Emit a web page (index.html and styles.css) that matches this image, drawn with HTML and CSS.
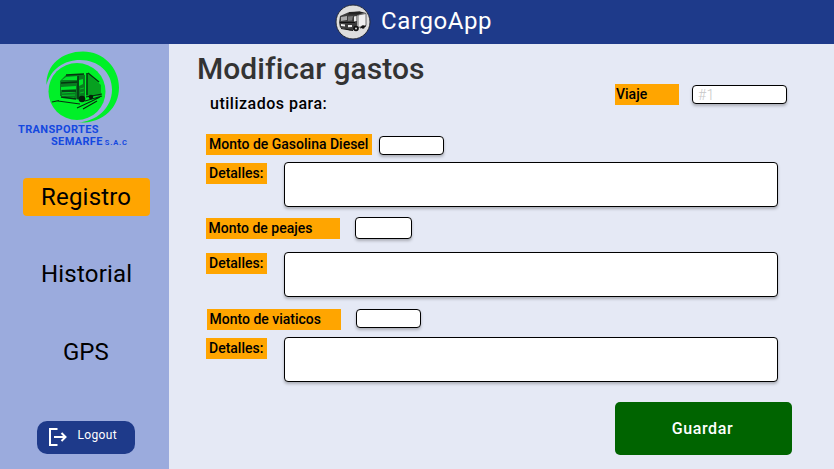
FILE: index.html
```html
<!DOCTYPE html>
<html lang="es">
<head>
<meta charset="utf-8">
<title>CargoApp</title>
<link rel="stylesheet" href="styles.css">
</head>
<body>
<header class="topbar">
  <svg class="topbar-logo" viewBox="0 0 36 36" width="36" height="36">
    <circle cx="18" cy="18" r="17" fill="#dedede" stroke="#252a38" stroke-width="1"/>
    <path d="M5 12l8-3.500 12-1v3l-3 1v10l-2 4-5 1-10-3-1-5z" fill="#3c3c3c"/>
    <path d="M14 8l11-.5 6 1.500-9 1.500-9 0z" fill="#222"/>
    <path d="M23 11l8-1.500v12l-8 2z" fill="#f0f0f0" stroke="#333" stroke-width=".7"/>
    <path d="M6 13l6-1v4l-6 1z" fill="#aaa"/>
    <path d="M13 12.500l5-.5-1 4.500-4 .5z" fill="#777"/>
    <path d="M19 12.500l2.500-.5v5l-2.500.5zM6 20l4 .5v2l-4-.5zM13 21l4 0v2l-4 .3z" fill="#ededed"/>
    <path d="M5 18.500h15M6 24.500l12 2M25 24l6-2" stroke="#111" fill="none"/>
    <circle cx="21" cy="24.500" r="2.800" fill="#111"/>
    <circle cx="21" cy="24.500" r="1" fill="#ddd"/>
    <circle cx="28" cy="23" r="1.800" fill="#111"/>
  </svg>
  <span class="brand">CargoApp</span>
</header>
<div class="layout">
  <aside class="sidebar">
    <div class="company">
      <svg class="company-mark" viewBox="46 51 74 73" width="74" height="73">
        <path fill="#00f028" d="M46.500 85C46 65 62 51.500 83 51.500c20 0 36 16 36 36 0 21-17 36.500-41 35 18-1 34-14 34-33C112 72 98 60 80 60c-16 0-29 9-33.500 25z"/>
        <circle cx="77" cy="91.500" r="28.500" fill="#00f028"/>
        <path fill="#087c20" d="M60 81l6-6 16-1 3 1v22l-5 3-20-4z"/>
        <path fill="#07a020" d="M87 73l14 12v11l-15 1z"/>
        <path fill="#00e329" d="M62 80l4-3 12-1-1 4zM61 87l15-1v3l-15 1zM79 80l4-1v5l-4 2z"/>
        <path stroke="#04d22a" stroke-width=".8" fill="none" d="M62 93l13-1M62 95.500l13-.5M63 98h11M80 89l4-1M80 93l4-1"/>
        <path stroke="#053410" stroke-width="1.500" fill="none" d="M61 83l16-1M62 91h14M61 97l15 2M78 76v23M66 75l18-1M87 73v22M88 73l11 9"/>
        <path stroke="#052e0e" stroke-width="1.200" fill="none" d="M52 102l7-1.500M58 101l22 3M86 97l16-3M85 101l17-5M77 108l15-7 8-4M83 109l14-8"/>
        <circle cx="82" cy="99" r="3.300" fill="#04230a"/>
        <circle cx="91" cy="97" r="2.300" fill="#04230a"/>
      </svg>
      <div class="company-name">TRANSPORTES</div>
      <div class="company-sub">SEMARFE<small>S.A.C</small></div>
    </div>
    <nav class="menu">
      <a class="menu-item active">Registro</a>
      <a class="menu-item">Historial</a>
      <a class="menu-item gps">GPS</a>
    </nav>
    <button class="logout">
      <svg viewBox="0 0 20 20" width="20" height="20" fill="none" stroke="#fff" stroke-width="2"><path d="M9.500 2H2v16h7.500M6 10h11.500M13.500 6l4 4-4 4"/></svg>
      <span>Logout</span>
    </button>
  </aside>
  <main class="content">
    <div class="heading">
      <div class="titles">
        <h1>Modificar gastos</h1>
        <p>utilizados para:</p>
      </div>
      <div class="trip">
        <label class="tag tag-trip">Viaje</label>
        <div class="field field-trip">#1</div>
      </div>
    </div>
    <section class="expense fuel">
      <div class="amount"><label class="tag">Monto de Gasolina Diesel</label><div class="field"></div></div>
      <div class="details"><label class="tag">Detalles:</label><div class="field area"></div></div>
    </section>
    <section class="expense tolls">
      <div class="amount"><label class="tag">Monto de peajes</label><div class="field"></div></div>
      <div class="details"><label class="tag">Detalles:</label><div class="field area"></div></div>
    </section>
    <section class="expense allowance">
      <div class="amount"><label class="tag">Monto de viaticos</label><div class="field"></div></div>
      <div class="details"><label class="tag">Detalles:</label><div class="field area"></div></div>
    </section>
    <button class="save">Guardar</button>
  </main>
</div>
</body>
</html>
```
FILE: styles.css
```css
* { box-sizing: border-box; }
body { margin: 0; width: 834px; height: 469px; overflow: hidden; font-family: Roboto, sans-serif; color: #000; background: #e5e9f5; }
button { border: 0; padding: 0; font-family: inherit; }
.topbar { height: 44px; background: #1e3a8a; display: flex; align-items: flex-start; padding: 4px 0 0 335px; }
.brand { margin-left: 10px; font-size: 24px; line-height: 34px; letter-spacing: .6px; color: #fff; white-space: nowrap; }
.layout { display: flex; height: 425px; }
.sidebar { width: 169px; background: #9babdd; display: flex; flex-direction: column; flex-shrink: 0; }
.company { height: 134px; padding-top: 7px; color: #1448e0; font-family: Roboto, sans-serif; font-weight: 700; white-space: nowrap; }
.company-mark { display: block; margin-left: 46px; }
.company-name { margin-left: 18px; font-size: 11px; line-height: 12px; letter-spacing: .35px; }
.company-sub { margin-left: 51px; font-size: 11px; line-height: 12px; letter-spacing: .35px; }
.company-sub small { font-size: 7.5px; margin-left: 2px; letter-spacing: .8px; }
.menu { display: flex; flex-direction: column; gap: 39px; margin-left: 23px; width: 127px; }
.menu-item { height: 38px; line-height: 38px; font-size: 24px; padding-left: 18px; border-radius: 4px; white-space: nowrap; letter-spacing: .2px; }
.menu-item.active { background: #ffa500; }
.menu-item.gps { padding-left: 40px; margin-top: 1px; letter-spacing: 0; }
.logout { margin: 50px 0 0 37px; width: 98px; height: 33px; border-radius: 10px; background: #1e3a8a; color: #fff; display: flex; align-items: flex-start; padding: 6px 0 0 11px; font-size: 12px; line-height: 17px; letter-spacing: .35px; }
.logout span { margin-left: 9.500px; }
.content { flex: 1; padding-left: 37px; }
.heading { height: 90px; display: flex; }
.titles { width: 409px; }
h1 { margin: 8px 0 0 -9px; font-size: 30px; line-height: 34px; font-weight: 500; color: #333; letter-spacing: .05px; }
p { margin: 9px 0 0 4px; font-size: 16px; line-height: 18px; font-weight: 500; letter-spacing: .5px; }
.trip { display: flex; align-items: flex-start; padding-top: 40px; }
.tag { display: block; height: 21px; line-height: 21px; padding-left: 3px; font-size: 14px; font-weight: 500; background: #ffa500; white-space: nowrap; flex-shrink: 0; }
.tag-trip { width: 64px; padding-left: 1px; }
.field { border: 1px solid #000; border-radius: 4px; background: #fff; box-shadow: 0 2px 3px rgba(0, 0, 0, .25); }
.field-trip { width: 95px; height: 19px; margin: 1px 0 0 13px; padding-left: 5px; line-height: 18px; font-size: 14px; font-weight: 300; color: #c8c8c8; letter-spacing: .3px; }
.amount, .details { display: flex; align-items: flex-start; }
.details .tag { width: 61px; margin-top: 1px; }
.area { width: 494px; height: 45px; margin-left: 17px; }
.fuel { height: 83px; }
.fuel .amount { height: 28px; }
.fuel .amount .tag { width: 166px; }
.fuel .amount .field { width: 65px; height: 19px; margin: 2px 0 0 7px; }
.tolls { height: 92px; }
.tolls .amount { height: 35px; }
.tolls .amount .tag { width: 134px; margin-top: 1px; padding-left: 2.500px; }
.tolls .amount .field { width: 57px; height: 22px; margin-left: 15px; }
.allowance { height: 93px; }
.allowance .amount { height: 28px; }
.allowance .amount .tag { width: 134px; margin-left: 1px; padding-left: 2.500px; }
.allowance .amount .field { width: 65px; height: 19px; margin-left: 15px; }
.save { display: block; width: 177px; height: 53px; margin-left: 409px; border-radius: 5px; background: #006400; color: #fff; font-size: 16px; font-weight: 500; letter-spacing: .6px; text-align: center; padding-right: 2px; }
```
